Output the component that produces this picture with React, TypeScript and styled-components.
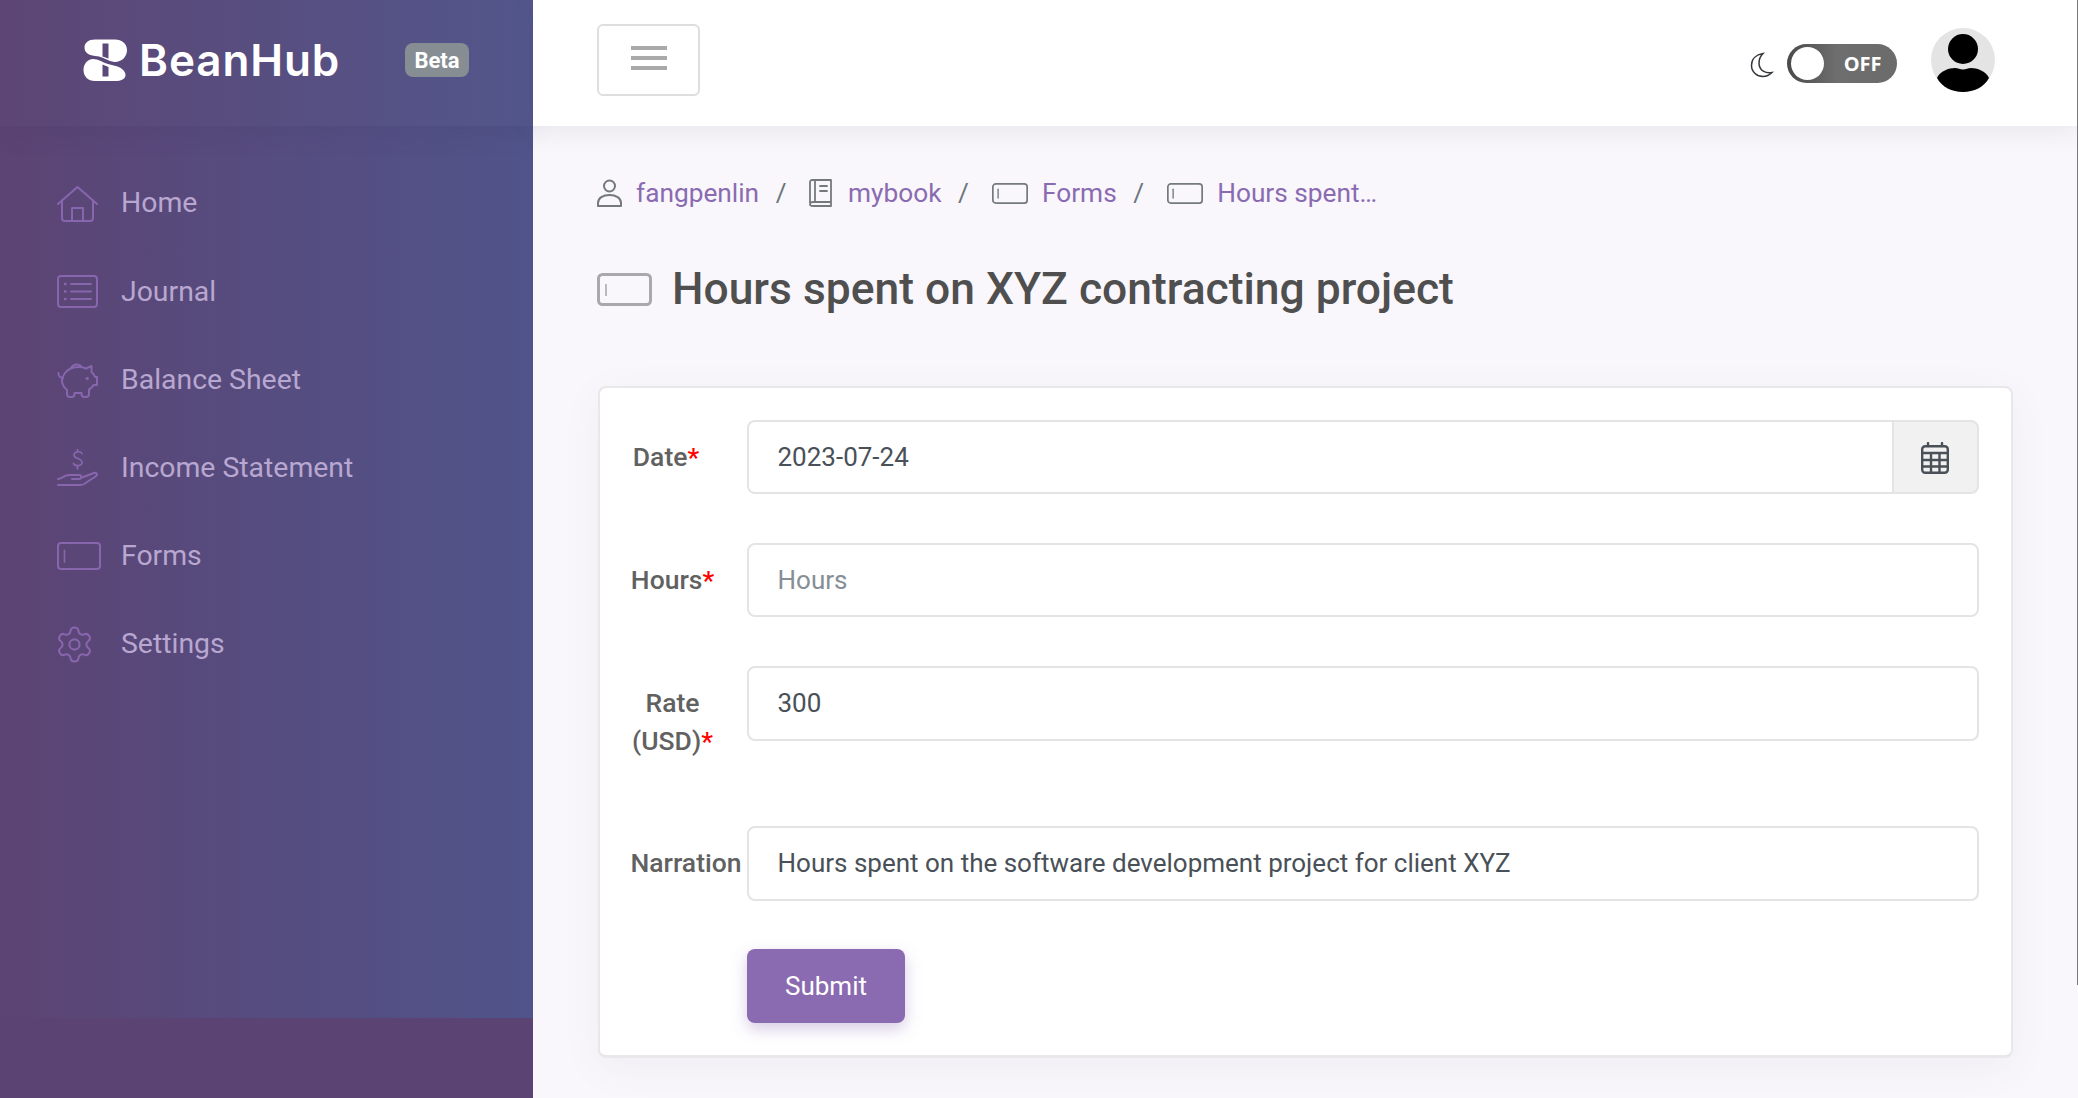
import React from "react";
import styled, { createGlobalStyle } from "styled-components";
import { Settings } from "lucide-react";

const Global = createGlobalStyle`
  html, body { margin: 0; padding: 0; height: 100%; overflow: hidden; }
  body { font-family: Roboto, "Liberation Sans", sans-serif; background: #f9f7fb; color: #4f4f4f; }
  * { box-sizing: border-box; }
`;

const Shell = styled.div`
  display: flex;
  height: 1098px;
  width: 2078px;
  position: relative;
`;
const ScrollEdge = styled.div`
  position: absolute;
  top: 0;
  right: 0;
  width: 1px;
  height: 985px;
  background: #7a7a7a;
  z-index: 5;
`;
const Sidebar = styled.aside`
  flex: none;
  width: 533px;
  display: flex;
  flex-direction: column;
  background: #5b4373;
`;
const SidebarPanel = styled.div`
  height: 1018px;
  background: linear-gradient(90deg, #5c4474 0%, #50548a 100%);
`;
const Brand = styled.div`
  height: 126px;
  display: flex;
  align-items: center;
  padding-left: 83px;
  box-shadow: 0 6px 24px rgba(60, 50, 90, 0.12);
  background: rgba(255, 255, 255, 0.01);
`;
const LogoMark = styled.svg`
  width: 44px;
  height: 44px;
  flex: none;
  margin-top: -6px;
`;
const BrandName = styled.span`
  font-family: Inter, Roboto, sans-serif;
  font-weight: 600;
  font-size: 44px;
  letter-spacing: 0.9px;
  line-height: 1;
  color: #fff;
  margin-left: 12px;
  margin-top: -6px;
  width: 266px;
  flex: none;
`;
const BetaBadge = styled.span`
  width: 64px;
  height: 34px;
  margin-top: -6px;
  border-radius: 8px;
  background: #868e93;
  color: #fff;
  font-weight: 700;
  font-size: 22px;
  display: flex;
  align-items: center;
  justify-content: center;
`;
const Nav = styled.nav`
  padding-top: 33.5px;
  display: flex;
  flex-direction: column;
`;
const NavItem = styled.a`
  height: 88.2px;
  display: flex;
  align-items: center;
  padding-left: 57px;
  color: #b8a7d0;
  font-size: 28.4px;
  line-height: 1;
`;
const NavIcon = styled.span`
  width: 64px;
  flex: none;
  display: flex;
  align-items: center;
  color: #8766ad;
  svg { display: block; }
`;
const GearIcon = styled(Settings)`
  margin-left: -3px;
`;

const Main = styled.main`
  flex: 1;
  min-width: 0;
  display: flex;
  flex-direction: column;
`;
const Header = styled.header`
  height: 126px;
  flex: none;
  background: #fff;
  display: flex;
  align-items: center;
  padding: 0 83.5px 0 64px;
  box-shadow: 0 6px 24px rgba(80, 70, 110, 0.09);
  position: relative;
`;
const MenuButton = styled.button`
  width: 103px;
  height: 72px;
  margin-top: -6px;
  background: #fff;
  border: 2px solid #dedede;
  border-radius: 6px;
  display: flex;
  flex-direction: column;
  align-items: center;
  justify-content: center;
  gap: 6px;
  padding: 0 0 4px;
`;
const MenuBar = styled.span`
  width: 36px;
  height: 4px;
  background: #a9a9a9;
`;
const HeaderRight = styled.div`
  margin-left: auto;
  display: flex;
  align-items: center;
`;
const MoonIcon = styled.svg`
  width: 24px;
  height: 26px;
  margin-right: 13px;
  margin-top: 4px;
`;
const Toggle = styled.div`
  width: 110px;
  height: 39px;
  margin-top: 1px;
  margin-right: 34px;
  border-radius: 20px;
  background: linear-gradient(90deg, #4a4a4a 0%, #6e6e6e 45%, #6b6b6b 100%);
  position: relative;
  display: flex;
  align-items: center;
  justify-content: flex-end;
  padding-right: 15px;
  color: #fff;
  font-family: "Open Sans", sans-serif;
  font-weight: 700;
  font-size: 20px;
`;
const ToggleKnob = styled.span`
  position: absolute;
  left: 4px;
  top: 3px;
  width: 33px;
  height: 33px;
  border-radius: 50%;
  background: #fff;
`;
const Avatar = styled.svg`
  width: 64px;
  height: 64px;
  margin-top: -6px;
`;

const Content = styled.div`
  flex: 1;
  padding: 0 65px 0 64px;
`;
const Breadcrumbs = styled.div`
  display: flex;
  align-items: center;
  height: 40px;
  margin-top: 47px;
  font-size: 26.25px;
  color: #8a6bb1;
`;
const CrumbIcon = styled.span<{ $gap: number }>`
  display: flex;
  align-items: center;
  flex: none;
  color: #74797e;
  margin-right: ${(p) => p.$gap}px;
`;
const CrumbLink = styled.a`
  color: #8a6bb1;
`;
const CrumbSep = styled.span`
  color: #6c757d;
  width: 44px;
  margin-right: 6px;
  flex: none;
  text-align: center;
`;
const TitleRow = styled.div`
  display: flex;
  align-items: center;
  margin-top: 47px;
  height: 58px;
`;
const TitleIcon = styled.svg`
  width: 55px;
  height: 33px;
  flex: none;
  margin-right: 20px;
`;
const Title = styled.h1`
  margin: 0;
  font-weight: 500;
  font-size: 44.4px;
  line-height: 1;
  color: #4f4f4f;
`;
const Card = styled.section`
  margin-top: 68px;
  margin-left: 0.5px;
  width: 1415px;
  height: 672px;
  background: #fff;
  border: 2px solid #e8e8ea;
  border-bottom-width: 3px;
  border-radius: 8px;
  padding: 32px 32px 0 31px;
  box-shadow: 0 10px 40px rgba(90, 80, 120, 0.06);
`;
const FieldRow = styled.div`
  display: flex;
  align-items: flex-start;
  margin-bottom: 49px;
`;
const FieldLabel = styled.label<{ $nudge?: number }>`
  flex: none;
  width: 84px;
  margin-right: 32px;
  padding: 18px ${(p) => p.$nudge ?? 0}px 17px 0;
  font-weight: 500;
  font-size: 26.5px;
  line-height: 38px;
  text-align: center;
  color: #616161;
`;
const Star = styled.span`
  color: #f00;
`;
const InputGroup = styled.div`
  flex: 1;
  display: flex;
  height: 74.2px;
  min-width: 0;
`;
const TextInput = styled.input<{ $joined?: boolean }>`
  flex: 1;
  min-width: 0;
  height: 100%;
  font: 400 26px Roboto, sans-serif;
  color: #495057;
  padding: 0 29px;
  background: #fff;
  border: 2px solid #e4e4e4;
  border-radius: ${(p) => (p.$joined ? "8px 0 0 8px" : "8px")};
  ${(p) => (p.$joined ? "border-right: 0;" : "")}
  outline: none;
  &::placeholder { color: #868e96; opacity: 1; }
`;
const Addon = styled.div`
  flex: none;
  width: 87px;
  height: 100%;
  border: 2px solid #e4e4e4;
  border-radius: 0 8px 8px 0;
  background: #f1f1f2;
  display: flex;
  align-items: center;
  justify-content: center;
  color: #495057;
  padding-top: 1px;
`;
const SubmitRow = styled.div`
  padding-left: 116px;
  margin-top: -0.5px;
`;
const SubmitButton = styled.button`
  width: 158px;
  height: 74px;
  border: 0;
  border-radius: 8px;
  background: #8a6bb1;
  color: #fff;
  font: 400 26px Roboto, sans-serif;
  padding: 0 0 0 1px;
  box-shadow: 0 6px 16px rgba(138, 107, 177, 0.35);
`;

const Stroke = { fill: "none", stroke: "currentColor", strokeLinecap: "round", strokeLinejoin: "round" } as const;

const FormIcon = ({ w = 44, h = 28, sw = 2 }: { w?: number; h?: number; sw?: number }) => (
  <svg width={w} height={h} viewBox={`0 0 ${w} ${h}`} {...Stroke} strokeWidth={sw}>
    <rect x={sw / 2} y={sw / 2} width={w - sw} height={h - sw} rx="3" />
    <path d={`M${w * 0.17} ${h * 0.3}v${h * 0.42}`} strokeWidth={sw * 0.8} />
  </svg>
);

const HomeIcon = () => (
  <svg width="41" height="36" viewBox="0 0 41 36" {...Stroke} strokeWidth="2">
    <path d="M1 18 20.5 1 40 18" />
    <path d="M5 14.5V32a3 3 0 0 0 3 3h25a3 3 0 0 0 3-3V14.5" />
    <path d="M15 35V22h11v13" />
  </svg>
);
const JournalIcon = () => (
  <svg width="41" height="33" viewBox="0 0 41 33" {...Stroke} strokeWidth="2">
    <rect x="1" y="1" width="39" height="31" rx="3" />
    <path d="M14 9h20M14 16.5h20M14 24h20" />
    <path d="M8 9h.5M8 16.5h.5M8 24h.5" strokeWidth="2.6" />
  </svg>
);
const PiggyIcon = () => (
  <svg width="41" height="37" viewBox="0 0 41 37" {...Stroke} strokeWidth="2">
    <path d="M14 7a6.5 6.5 0 0 1 11-1" />
    <path d="M6 17c-2.5 0-5-2-4.5-5" />
    <path d="M8 12c3-4 8-6 14-6 3 0 5 .5 7 1.5L34.500 5v6c2 1.500 3 3.500 3.500 5H40v8h-3.500c-1 2-2.500 3.500-4.500 4.500V33a3 3 0 0 1-3 3h-1.500a3 3 0 0 1-3-3v-1h-7v1a3 3 0 0 1-3 3H13a3 3 0 0 1-3-3v-4c-3-2.500-5-6-5-9.500 0-2.500 1-5 3-7.500Z" />
    <path d="M30 17.500h.4" strokeWidth="3" />
  </svg>
);
const IncomeIcon = () => (
  <svg width="41" height="38" viewBox="0 0 41 38" {...Stroke} strokeWidth="2">
    <path d="M25 4.500C24 2 17 2 17 6c0 4.500 8 2.500 8 7.500 0 4-7 4-8.500 1M20.500 0v2M20.500 18v2" strokeWidth="1.700" />
    <path d="M1 30c4 0 6-4 11-4h10c3 0 3 4 0 4h-7" />
    <path d="M25 28.500 37 24c3-1 4 2 1.500 3.500L27 35c-1 .6-2 1-3 1H1" />
  </svg>
);
const UserIcon = () => (
  <svg width="25" height="28" viewBox="0 0 25 28" {...Stroke} strokeWidth="2">
    <circle cx="12.500" cy="7" r="5.500" />
    <path d="M1 27v-3c0-5 5-8 11.500-8S24 19 24 24v3Z" />
  </svg>
);
const BookIcon = () => (
  <svg width="24" height="28" viewBox="0 0 24 28" {...Stroke} strokeWidth="1.800">
    <path d="M1 24V3a2 2 0 0 1 2-2h19v22H4c-2 0-3 1-3 2.200S2 27 4 27h18v-4" />
    <path d="M6 1v22M11 7h7M11 12h7" />
  </svg>
);
const CalendarIcon = () => (
  <svg width="28" height="32" viewBox="0 0 28 32" {...Stroke} strokeWidth="2.400">
    <rect x="1.200" y="4.200" width="25.600" height="26.600" rx="3" />
    <path d="M7 1v3M21 1v3M1.200 11h25.600M1.200 18h25.600M1.200 24.500h25.600M10 11v19.800M18.500 11v19.800" />
  </svg>
);

const items: [string, React.ReactNode][] = [
  ["Home", <HomeIcon />],
  ["Journal", <JournalIcon />],
  ["Balance Sheet", <PiggyIcon />],
  ["Income Statement", <IncomeIcon />],
  ["Forms", <FormIcon />],
  ["Settings", <GearIcon size={41} strokeWidth={1.2} />],
];

export default function App() {
  return (
    <Shell>
      <Global />
      <ScrollEdge />
      <Sidebar>
        <SidebarPanel>
          <Brand>
            <LogoMark viewBox="0 0 44 44">
              <path
                fill="#fff"
                fillRule="evenodd"
                d="M12 1.500H32C39 1.500 44 6 44 12C44 19 38.500 24 32 24C27 24 22 20 16 18.500C11 17.500 7 17.500 4.500 15.500C2.500 14 1.500 12 1.500 9.500C1.500 5 5.500 1.500 12 1.500ZM19.500 5.500V18.500L25.500 20.500V5.500Z"
              />
              <path
                fill="#fff"
                fillRule="evenodd"
                d="M10 21C15 21 19 24 25 26C30 27.500 36 28 39 31C41.500 33 42.500 35 42.500 37C42.500 41 38 43 32 43H12C5 43 .5 38.500 .5 32C.5 26 4.500 21 10 21ZM19.500 26.500V38.500H25.500V29Z"
              />
            </LogoMark>
            <BrandName>BeanHub</BrandName>
            <BetaBadge>Beta</BetaBadge>
          </Brand>
          <Nav>
            {items.map(([label, icon]) => (
              <NavItem key={label}>
                <NavIcon>{icon}</NavIcon>
                {label}
              </NavItem>
            ))}
          </Nav>
        </SidebarPanel>
      </Sidebar>
      <Main>
        <Header>
          <MenuButton aria-label="menu">
            <MenuBar />
            <MenuBar />
            <MenuBar />
          </MenuButton>
          <HeaderRight>
            <MoonIcon viewBox="0 0 24 26" fill="none" stroke="#33363b" strokeWidth="1.500">
              <path d="M13 1.500C6 2.500 1.500 7 1.500 13.500S7 24.500 13 24.500c3.500 0 6.500-1.500 9-4-6 1-13-1.500-13-9.500 0-4 1.500-7 4-9.500Z" />
            </MoonIcon>
            <Toggle>
              <ToggleKnob />
              OFF
            </Toggle>
            <Avatar viewBox="0 0 64 64">
              <circle cx="32" cy="32" r="32" fill="#e4e4e4" />
              <circle cx="32" cy="21" r="15" fill="#000" />
              <path fill="#000" d="M6 50c3-7 12-10 18-10 3 0 5 1.500 8 1.500S37 40 40 40c6 0 15 3 18 10-5 9-15 14-26 14S11 59 6 50Z" />
            </Avatar>
          </HeaderRight>
        </Header>
        <Content>
          <Breadcrumbs>
            <CrumbIcon $gap={14}><UserIcon /></CrumbIcon>
            <CrumbLink>fangpenlin</CrumbLink>
            <CrumbSep>/</CrumbSep>
            <CrumbIcon $gap={15}><BookIcon /></CrumbIcon>
            <CrumbLink>mybook</CrumbLink>
            <CrumbSep>/</CrumbSep>
            <CrumbIcon $gap={14.5}><FormIcon w={36} h={21} sw={1.7} /></CrumbIcon>
            <CrumbLink>Forms</CrumbLink>
            <CrumbSep>/</CrumbSep>
            <CrumbIcon $gap={14.5}><FormIcon w={36} h={21} sw={1.7} /></CrumbIcon>
            <CrumbLink>Hours spent…</CrumbLink>
          </Breadcrumbs>
          <TitleRow>
            <TitleIcon viewBox="0 0 55 33" fill="none" stroke="#a9a9ad" strokeWidth="3">
              <rect x="1.500" y="1.500" width="52" height="30" rx="4" />
              <path d="M9 11v12" strokeWidth="1.600" />
            </TitleIcon>
            <Title>Hours spent on XYZ contracting project</Title>
          </TitleRow>
          <Card>
            <FieldRow>
              <FieldLabel $nudge={13}>Date<Star>*</Star></FieldLabel>
              <InputGroup>
                <TextInput $joined defaultValue="2023-07-24" />
                <Addon><CalendarIcon /></Addon>
              </InputGroup>
            </FieldRow>
            <FieldRow>
              <FieldLabel>Hours<Star>*</Star></FieldLabel>
              <InputGroup><TextInput placeholder="Hours" /></InputGroup>
            </FieldRow>
            <FieldRow>
              <FieldLabel>Rate (USD)<Star>*</Star></FieldLabel>
              <InputGroup><TextInput defaultValue="300" /></InputGroup>
            </FieldRow>
            <FieldRow>
              <FieldLabel>Narration</FieldLabel>
              <InputGroup><TextInput defaultValue="Hours spent on the software development project for client XYZ" /></InputGroup>
            </FieldRow>
            <SubmitRow><SubmitButton>Submit</SubmitButton></SubmitRow>
          </Card>
        </Content>
      </Main>
    </Shell>
  );
}
